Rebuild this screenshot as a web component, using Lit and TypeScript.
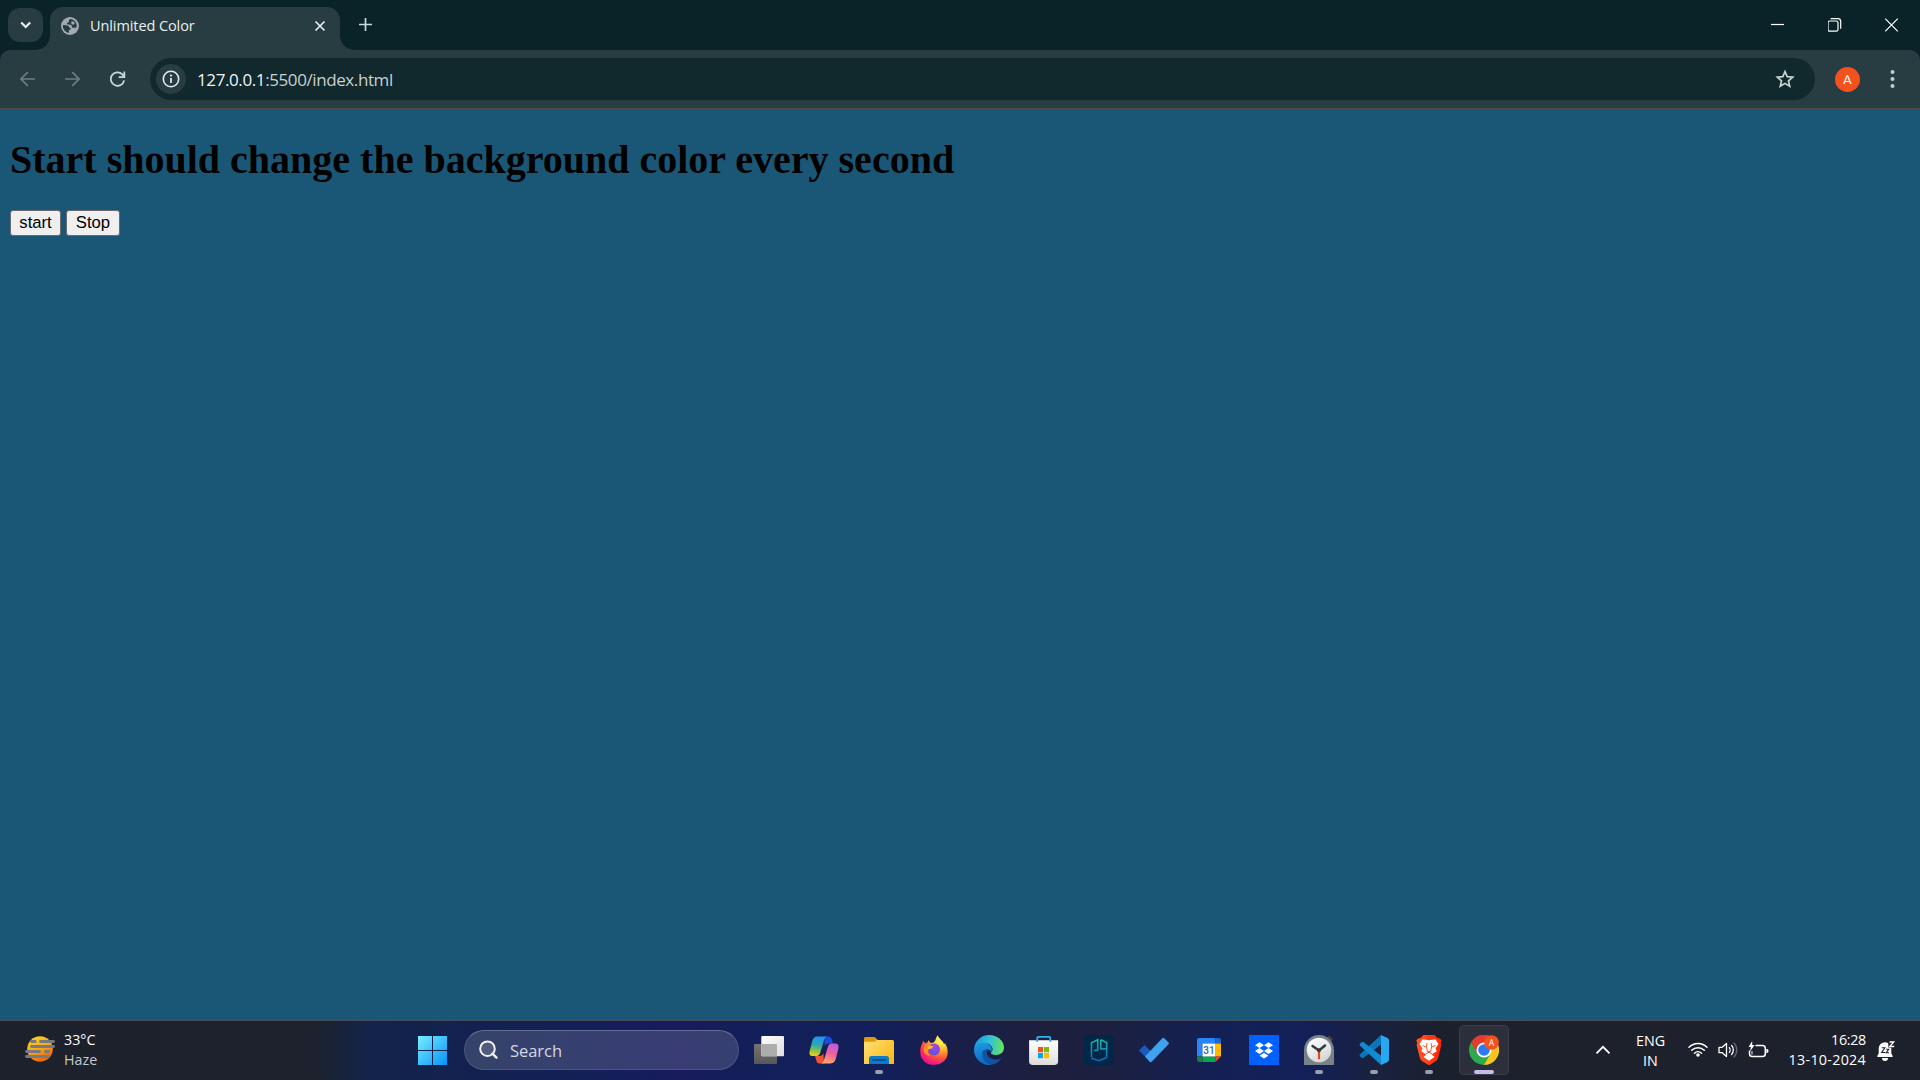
import { LitElement, html, css, svg } from "lit";
import { customElement, state } from "lit/decorators.js";

const icon = (w: number, h: number, body: unknown) =>
  html`<svg width=${w} height=${h} viewBox="0 0 ${w} ${h}" fill="none">${body}</svg>`;

const chevronDown = icon(12, 8, svg`<path d="M1.200 1.500 5.700 6l4.500-4.500" stroke="#e8efef" stroke-width="2.200"/>`);

const globe = icon(18, 18, svg`
  <circle cx="9" cy="9" r="9" fill="#a3a8b2"/>
  <path d="M9.300 1.900C8 2.500 7.600 3.300 7.900 4.200c.3 .9-.6 1.300-1.500 1.500C5.500 6 5.700 7.200 6.500 7.400c1.400.3 3.700-.1 4.200 1 .4.900-.1 2.200 1 2.400 1.400.2 2.300-.3 4.100-.6A7.200 7.200 0 0 0 9.300 1.900Z" fill="#283d42"/>
  <path d="M1.900 8.100c1.800.1 4.500.3 5.600.8 1 .5.300 1.600 1.300 1.900 1 .2 1.300.7.900 1.400-.5.700-1.700.4-1.800 1.500-.1.800.3 1.500-.5 2.200A7.200 7.200 0 0 1 1.900 8.100Z" fill="#283d42"/>
  <path d="M10.500 4.500h2.300l1 2-1.600 1.200-1.900-.8Z" fill="#a3a8b2"/>`);

const tabClose = icon(12, 12, svg`<path d="m1.500 1.500 9 9m0-9-9 9" stroke="#e8efef" stroke-width="1.700"/>`);
const plus = icon(14, 14, svg`<path d="M6.500 0v13M0 6.500h13" stroke="#c2dbdf" stroke-width="1.700"/>`);
const minimise = icon(14, 14, svg`<path d="M0 6.500h13" stroke="#fff" stroke-width="1.200"/>`);
const restore = icon(14, 14, svg`
  <g transform="translate(-.6 0)"><rect x=".6" y="3" width="10" height="10.200" rx="1.700" stroke="#fff" stroke-width="1.200"/>
  <path d="M3.200.7h7.300a2.800 2.800 0 0 1 2.800 2.800v7.300" stroke="#fff" stroke-width="1.200"/></g>`);
const windowClose = icon(14, 14, svg`<path d="m.200.700 12.600 12.600m0-12.600L.2 13.300" stroke="#fff" stroke-width="1.200"/>`);

const back = icon(16, 16, svg`<path d="M15 8H1.200M7.800 1.100.9 8l6.900 6.900" stroke="#6d7e82" stroke-width="1.700"/>`);
const forward = icon(16, 16, svg`<path d="M0 8h13.800M7.200 1.100 14.100 8l-6.900 6.900" stroke="#6d7e82" stroke-width="1.700"/>`);
const reload = icon(16, 16, svg`
  <g transform="translate(-.5 0)"><path d="M14.600 9.300A6.700 6.700 0 1 1 12.800 3.400l1.400 1.700" stroke="#c2dbdf" stroke-width="1.800"/>
  <path d="M14.800.5v5.600H9.200" stroke="#c2dbdf" stroke-width="1.800"/></g>`);
const info = icon(18, 18, svg`
  <circle cx="9" cy="9" r="7.700" stroke="#e3eaea" stroke-width="1.600"/>
  <path d="M9 8v5" stroke="#e3eaea" stroke-width="1.800"/><circle cx="9" cy="5.600" r="1.100" fill="#e3eaea"/>`);
const star = icon(20, 20, svg`
  <path d="m10 2.600 2.200 5.100 5.500.5-4.200 3.700 1.200 5.400-4.700-2.900-4.700 2.900 1.200-5.400-4.200-3.700 5.500-.5Z" stroke="#c9d3d4" stroke-width="1.700"/>`);
const kebab = icon(6, 20, svg`
  <circle cx="2.500" cy="3" r="2" fill="#b7d2d6"/><circle cx="2.500" cy="10" r="2" fill="#b7d2d6"/><circle cx="2.500" cy="17" r="2" fill="#b7d2d6"/>`);

const haze = icon(30, 26, svg`
  <defs><linearGradient id="sun" x1="8" y1="0" x2="20" y2="26" gradientUnits="userSpaceOnUse">
    <stop stop-color="#ffd21a"/><stop offset=".5" stop-color="#fba61a"/><stop offset="1" stop-color="#e8590c"/></linearGradient></defs>
  <circle cx="15" cy="13" r="12.800" fill="url(#sun)"/>
  <g stroke="#777a7e" stroke-width="2.800" stroke-linecap="round">
    <path d="M6.500 5.500h3.700M15.500 5.500h13M6.500 10.500h22M1.500 15.500h13M20.500 15.500h3M1.500 20.500h22"/></g>`);

const windowsLogo = icon(30, 30, svg`
  <defs><linearGradient id="win" x1="0" y1="0" x2="30" y2="30" gradientUnits="userSpaceOnUse">
    <stop stop-color="#7af3ff"/><stop offset="1" stop-color="#0791fb"/></linearGradient></defs>
  <path d="M1 1h14v14H1ZM16 1h14v14H16ZM1 16h14v14H1ZM16 16h14v14H16Z" fill="url(#win)"/>`);

const magnifier = icon(20, 20, svg`
  <circle cx="8.500" cy="8.700" r="7.300" fill="#ffffff22" stroke="#f0f0f5" stroke-width="2"/>
  <path d="m13.500 13.700 4 4" stroke="#f0f0f5" stroke-width="2.400" stroke-linecap="round"/>`);

const taskView = icon(30, 30, svg`
  <defs><linearGradient id="tvw" x1="8" y1="1" x2="30" y2="21" gradientUnits="userSpaceOnUse">
    <stop stop-color="#fff"/><stop offset="1" stop-color="#dedede"/></linearGradient>
  <linearGradient id="tvg" x1="0" y1="9" x2="0" y2="29" gradientUnits="userSpaceOnUse">
    <stop stop-color="#747474"/><stop offset="1" stop-color="#575757"/></linearGradient></defs>
  <rect x="0" y="9" width="23" height="20" rx="1" fill="url(#tvg)"/>
  <rect x="7.300" y="1" width="22.700" height="20.300" rx="1" fill="url(#tvw)"/>
  <path d="M7.300 9H22q1 0 1 1v11.300H8.300q-1 0-1-1Z" fill="#adadad"/>`);

const copilot = icon(30, 28, svg`
  <defs><linearGradient id="cpa" x1="8" y1="0" x2="5" y2="20" gradientUnits="userSpaceOnUse">
    <stop stop-color="#2390f5"/><stop offset=".45" stop-color="#28acb0"/><stop offset=".75" stop-color="#8fc43f"/><stop offset="1" stop-color="#f5cf19"/></linearGradient>
  <linearGradient id="cpb" x1="25" y1="7" x2="18" y2="28" gradientUnits="userSpaceOnUse">
    <stop stop-color="#b45ce8"/><stop offset=".5" stop-color="#ef6099"/><stop offset="1" stop-color="#ffac68"/></linearGradient></defs>
  <path d="M15 .6h4.300c2.400 0 3.200 1.500 3.900 4l.8 2.900h-4.500c-2 0-3 .9-3.700 3Z" fill="#1b4cd8"/>
  <path d="M15 27.400h-4.300c-2.400 0-3-1.500-3.700-4l-.9-3.400h4.500c2 0 3-.9 3.700-3Z" fill="#f25535"/>
  <path d="M8.500.6h9.300c-1.600.5-2.300 2-2.900 4l-3.600 12c-.7 2.300-1.800 3.400-4 3.400H3.900C.7 20 0 18.200.6 15.500l2.500-10C4 2.300 5.500.6 8.500.600Z" fill="url(#cpa)"/>
  <path d="M21.500 27.400h-9.300c1.600-.5 2.300-2 2.900-4l3.600-12C19.400 9 20.500 7.500 22.700 7.500h3.400c3.200 0 3.900 2.300 3.300 5l-2.500 10c-.9 3.200-2.400 4.900-5.400 4.900Z" fill="url(#cpb)"/>`);

const folder = icon(30, 28, svg`
  <defs><linearGradient id="fld" x1="2" y1="4" x2="28" y2="28" gradientUnits="userSpaceOnUse">
    <stop stop-color="#ffdf73"/><stop offset="1" stop-color="#fab813"/></linearGradient></defs>
  <path d="M0 2.500Q0 1 1.500 1h8.300q1 0 1.800.8l2.200 2.200H29v8H0Z" fill="#dc9a0b"/>
  <path d="M0 5.800h9.800q1 0 1.900-.9l1-.9H28.500Q30 4 30 5.500V28H0Z" fill="url(#fld)"/>
  <path d="M5 28v-5.500Q5 20 7.500 20h15q2.500 0 2.500 2.500V28Z" fill="#0c79c9"/>
  <path d="M8.500 24h13" stroke="#08477f" stroke-width="1.400" stroke-linecap="round"/>`);

const firefox = icon(30, 30, svg`
  <defs><radialGradient id="ffx" cx="23" cy="4" r="27" gradientUnits="userSpaceOnUse">
    <stop offset=".15" stop-color="#fff04a"/><stop offset=".45" stop-color="#ffa62b"/><stop offset=".72" stop-color="#ff4f3c"/><stop offset="1" stop-color="#f2118d"/></radialGradient>
  <radialGradient id="ffp" cx="16" cy="11" r="9" gradientUnits="userSpaceOnUse">
    <stop stop-color="#a443e8"/><stop offset="1" stop-color="#6253db"/></radialGradient></defs>
  <path d="M3.200 8.500 4 5.700l2 2.300 2.500-.5L9.300 5l2.500 3c2 0 3-.7 4.300-2.200C17 3.500 17.600 1.500 18.600.300c1 2.300 2.400 3.600 4 5.100 1.300 1.200 2 2.200 2.500 3.700l.9-.9c2 2.900 3 6.300 2.600 9.800a13.600 11.600 0 0 1-27.200.5C1 14.500 1.500 11 3.200 8.500Z" fill="url(#ffx)"/>
  <circle cx="15" cy="14.500" r="6" fill="url(#ffp)"/>
  <path d="M5.500 10.500c3-1.500 6.500-.6 7.900.9l-1.700 2.300c-2 0-2.700.9-2.700 2.800 0 1.700.8 3.200 2.400 4.200-5 .4-8.400-4.700-5.900-10.200Z" fill="#ff8f24"/>
  <path d="M9 11h5.500l-2 2.800H9Z" fill="#ffb33a"/>`);

const edge = icon(30, 30, svg`
  <defs><linearGradient id="edt" x1="2" y1="9" x2="29" y2="13" gradientUnits="userSpaceOnUse">
    <stop stop-color="#1e9ddb"/><stop offset=".5" stop-color="#35c1d6"/><stop offset="1" stop-color="#65e35a"/></linearGradient>
  <linearGradient id="edb" x1="5" y1="8" x2="10" y2="29" gradientUnits="userSpaceOnUse">
    <stop stop-color="#1a9ae3"/><stop offset="1" stop-color="#0b67c2"/></linearGradient></defs>
  <path d="M0 15A15 15 0 0 1 15 0c8.500 0 15 6 15 12.500 0 4.700-3.500 7.500-8 7.500-3 0-5.500-1-5-2.500 2-1.500 2-4 .6-6C14 6 4.500 8 0 15Z" fill="url(#edt)"/>
  <path d="M0 15C2.500 8.500 9 6.700 13 8.300c4.500 1.700 6 6 4 9.200-.5-2.500-3-3.500-5-2.500-2.600 1.500-3 5.500-1 9 1.600 3 4.600 5.300 7.500 5.600A15 15 0 0 1 0 15Z" fill="url(#edb)"/>
  <path d="M8.500 16.500c-1.500 6 3.500 13.200 10 13.100 3.500-.7 7-2.900 9.300-6.600-6.500 3.500-13.800.5-14.800-4.500-.4-1.500.3-3 1-3.700-2.500-.7-4.800.200-5.500 1.700Z" fill="#10549f"/>`);

const store = icon(30, 30, svg`
  <defs><linearGradient id="sto" x1="0" y1="6" x2="0" y2="30" gradientUnits="userSpaceOnUse">
    <stop stop-color="#fff"/><stop offset="1" stop-color="#dcdcdc"/></linearGradient></defs>
  <g transform="translate(-.5 0)">
  <path d="M8.700 6.500V3q0-1.200 1.200-1.200h10.700q1.200 0 1.200 1.200v3.500" stroke="#2bb6ec" stroke-width="1.800"/>
  <path d="M.6 5.200h29v21q0 3.800-3.800 3.800H4.400Q.6 30 .6 26.200Z" fill="url(#sto)"/>
  <path d="M8.700 5v1.700M21.800 5v1.700" stroke="#1c9fd8" stroke-width="1.800"/>
  <path d="M9.500 12h5v5.200h-5Z" fill="#f25022"/><path d="M15.500 12h5v5.200h-5Z" fill="#7fba00"/>
  <path d="M9.500 18h5v5.200h-5Z" fill="#00a4ef"/><path d="M15.500 18h5v5.200h-5Z" fill="#ffb900"/></g>`);

const helmet = icon(30, 30, svg`
  <defs><linearGradient id="hlm" x1="0" y1="4" x2="0" y2="26" gradientUnits="userSpaceOnUse">
    <stop stop-color="#12b8a7"/><stop offset="1" stop-color="#1264c0"/></linearGradient></defs>
  <path d="M0 0h30v30H0Z" fill="#022645"/>
  <path d="M7.500 22.200V7.700L13.700 4.800V15.400H10M16.800 4.800 22.700 7.700V22.200M16.800 4.800V13.900H22.700M7.300 23.200 15 25.700 22.900 22.600" stroke="url(#hlm)" stroke-width="1.600"/>`);

const todo = icon(30, 26, svg`
  <path d="m0 13.500 5.500-5.600L17 19.300l-5.500 5.900Z" fill="#195abe"/>
  <path d="M6 19.500 23.300 1.200q1-.9 2 0l4.200 4.300q.8.900 0 1.800L12.700 24.800q-1 .9-2 0Z" fill="#3fa2ee"/>`);

const calendar = icon(24, 24, svg`
  <path d="M0 2Q0 0 2 0h16.500v5.500h-13v13H0Z" fill="#2684fc"/><path d="M18.500 0H22q2 0 2 2v3.500h-5.500Z" fill="#1967d2"/>
  <path d="M18.500 5.500H24v13h-5.500Z" fill="#ffba00"/><path d="M5.500 18.500h13V24h-13Z" fill="#00ac47"/>
  <path d="M0 18.500h5.500V24H2q-2 0-2-2Z" fill="#188038"/><path d="M18.500 18.500H24L18.500 24Z" fill="#ea4335"/>
  <path d="M5.500 5.500h13v13h-13Z" fill="#fff"/>
  <text x="12" y="15.800" text-anchor="middle" font-family="Roboto, sans-serif" font-weight="500" font-size="10" fill="#1967d2">31</text>`);

const dropbox = icon(30, 30, svg`
  <path d="M0 0h30v30H0Z" fill="#0061fe"/>
  <path d="m10.500 7.300 4.500 2.900-4.500 2.900L6 10.200ZM19.500 7.300l4.500 2.900-4.500 2.900-4.500-2.900ZM10.500 13.100 15 16l-4.500 2.900L6 16ZM19.500 13.100 24 16l-4.500 2.900L15 16ZM15 17.800l4.500 2.900-4.500 2.900-4.500-2.900Z" fill="#fff"/>`);

const clock = icon(30, 30, svg`
  <defs><linearGradient id="clk" x1="8" y1="3" x2="22" y2="27" gradientUnits="userSpaceOnUse">
    <stop stop-color="#fff"/><stop offset="1" stop-color="#d0d2d4"/></linearGradient></defs>
  <path d="m23 2.500 2-2 4 4-2 2.500Z" fill="#4a4640"/>
  <path d="M0 15a15 15 0 0 1 30 0v15H0Z" fill="#788289"/>
  <circle cx="15" cy="15" r="12.300" fill="url(#clk)"/>
  <path d="M15 15.500v8.700" stroke="#e34a12" stroke-width="2.200"/>
  <path d="m8.500 11 6.500 4.500 6-5" stroke="#34383b" stroke-width="2.500" stroke-linecap="round"/><circle cx="15" cy="15.300" r="2" fill="#34383b"/>`);

const vscode = icon(30, 30, svg`
  <path d="M22 0 1 19.200q-1 1 0 2l1.700 1.600q.9.700 1.900 0L23 8.800Z" fill="#0876bb"/>
  <path d="M22 30 1 10.800q-1-1 0-2l1.700-1.600q.9-.7 1.900 0L23 21.200Z" fill="#1389d2"/>
  <path d="M22 30V0l6.500 3q1.500.7 1.500 2.200v19.600q0 1.500-1.500 2.200Z" fill="#29a8f2"/>`);

const brave = icon(26, 30, svg`
  <defs><linearGradient id="brv" x1="0" y1="15" x2="26" y2="15" gradientUnits="userSpaceOnUse">
    <stop stop-color="#ff5627"/><stop offset="1" stop-color="#ff2500"/></linearGradient></defs>
  <path d="m7.500 0-3 3C2.700 2.700 1.500 3.500.3 5.500L1.300 8l-.7 2L4 23.300q.5 1.600 2 2.600l5.500 3.700q1.500.9 3 0L20 25.900q1.500-1 2-2.600L25.400 10l-.7-2 1-2.500c-1.200-2-2.400-2.800-4.200-2.500l-3-3Z" fill="url(#brv)"/>
  <path d="m13 5.300 6.500-1L22.500 9l-3 4.200 1.200 3-5 3.300L18.500 22 13 25.700 7.500 22l2.800-2.500-5-3.300 1.200-3L3.500 9l3-4.700Z" fill="#fff"/>
  <path d="m11 8-.7 3.500 1.200 5h3l1.200-5L15 8M6.500 10.500l4 1.500M19.500 10.500l-4 1.500M10 18.800l3-1.500 3 1.500" stroke="#ff4017" stroke-width=".9"/>`);

const chrome = icon(30, 30, svg`
  <circle cx="15" cy="15" r="15" fill="#2da94f"/>
  <path d="M15 15 2 7.500A15 15 0 0 1 28 7.500Z" fill="#e33b2e"/><path d="M2 7.500 8.500 18.700 15 15V7.500Z" fill="#e33b2e"/>
  <path d="M15 7.500H28A15 15 0 0 1 15 30l6.500-11.300Z" fill="#fcc31e"/>
  <circle cx="15" cy="15" r="7.500" fill="#fff"/><circle cx="15" cy="15" r="5.800" fill="#2a7bf0"/>
  <circle cx="22.500" cy="7.500" r="7.300" fill="#f4511e"/>
  <text x="22.500" y="10.600" text-anchor="middle" font-family="Roboto, sans-serif" font-size="8.500" fill="#fff">A</text>`);

const chevronUp = icon(16, 10, svg`<path d="m1.500 8.300 6.500-6.500 6.500 6.500" stroke="#fff" stroke-width="1.800"/>`);
const wifi = icon(20, 16, svg`
  <g stroke="#fff" stroke-width="1.500" stroke-linecap="round"><path d="M1 6.200a12.700 12.700 0 0 1 18 0M3.700 9.300a8.900 8.900 0 0 1 12.600 0M6.500 12.200a5 5 0 0 1 7 0"/></g>
  <circle cx="10" cy="14" r="1.800" fill="#fff"/>`);
const speaker = icon(20, 18, svg`
  <path d="M1 6.300h3.200L8.500 2.500v13L4.200 11.700H1Z" stroke="#fff" stroke-width="1.300" stroke-linejoin="round"/>
  <path d="M11 6.200a4 4 0 0 1 0 5.600M13.300 4a7.200 7.200 0 0 1 0 10" stroke="#fff" stroke-width="1.300"/>
  <path d="M15.700 1.600a10.500 10.500 0 0 1 0 14.800" stroke="#666b74" stroke-width="1.300"/>`);
const battery = icon(21, 18, svg`
  <path d="M7.500 4.500H14.500Q17.300 4.500 17.300 7.300v5.400q0 2.800-2.800 2.800H4.300Q1.500 15.500 1.500 12.700V9.500" stroke="#fff" stroke-width="1.500"/>
  <path d="M18.300 8h.8q1.400 0 1.400 2t-1.400 2h-.8Z" fill="#fff"/>
  <path d="M4.200 0 .5 6h2.300L2 10.500 6.600 4H4.200Z" fill="#fff"/><path d="M4 10v3.500" stroke="#ccc" stroke-width="1.200"/>`);
const bell = icon(18, 20, svg`
  <path d="M8 1.200a6.300 6.300 0 0 0-6.300 6.300v5L.3 15v1h15.400v-1l-1.400-2.500v-5A6.300 6.300 0 0 0 8 1.200Z" fill="#fff"/>
  <path d="M5 17h6a3 3 0 0 1-6 0Z" fill="#fff"/>
  <path d="M11.300 0H18v6.600h-6.700Z" fill="#1d212b"/>
  <path d="M12.500 1h4.200L12.700 5.500h4.500" stroke="#fff" stroke-width="1.300"/>
  <path d="M4.700 6.800h3.200L4.700 11.500h3.500M9.200 8.300h2.500l-2.500 3.400h2.800" stroke="#1d212b" stroke-width="1.100"/>`);

interface Pinned {
  name: string;
  art: unknown;
  open?: boolean;
  active?: boolean;
}

const pinned: Pinned[] = [
  { name: "Task view", art: taskView },
  { name: "Copilot", art: copilot },
  { name: "Files", art: folder, open: true },
  { name: "Firefox", art: firefox },
  { name: "Edge", art: edge },
  { name: "Store", art: store },
  { name: "Helmet", art: helmet },
  { name: "To Do", art: todo },
  { name: "Calendar", art: calendar },
  { name: "Dropbox", art: dropbox },
  { name: "Clock", art: clock, open: true },
  { name: "Code", art: vscode, open: true },
  { name: "Brave", art: brave, open: true },
  { name: "Chrome", art: chrome, active: true },
];

@customElement("browser-frame")
class BrowserFrame extends LitElement {
  static styles = css`
    :host { display: block; font-family: "Open Sans", "Noto Sans", sans-serif; }
    svg { display: block; flex: none; }
    .tabs { display: flex; height: 50px; background: #0a2328; padding-left: 8px; box-sizing: border-box; }
    .tabsearch { width: 35px; height: 34px; margin-top: 8px; border-radius: 12px; background: #283d42; display: grid; place-items: center; }
    .tab { position: relative; box-sizing: border-box; width: 290px; height: 43px; margin: 7px 0 0 7px; padding: 0 14px 6px 11px; border-radius: 13px 13px 0 0; background: #283d42; display: flex; align-items: center; color: #e8efef; font-size: 14.5px; letter-spacing: -0.09px; }
    .tab::before, .tab::after { content: ""; position: absolute; bottom: 0; width: 14px; height: 14px; }
    .tab::before { left: -14px; background: radial-gradient(circle at 0 0, transparent 13.500px, #283d42 14px); }
    .tab::after { right: -14px; background: radial-gradient(circle at 100% 0, transparent 13.500px, #283d42 14px); }
    .title { flex: 1; padding-left: 11px; line-height: 20px; }
    .new { width: 51px; display: grid; place-items: center; }
    .controls { margin-left: auto; display: flex; height: 49px; }
    .control { width: 57px; display: grid; place-items: center; }
    .edge { background: #0a2328; }
    .toolbar { box-sizing: border-box; height: 59px; background: #283d42; border-radius: 10px 10px 0 0; border-bottom: 1px solid #51484e; display: flex; align-items: center; padding: 0 5px; }
    .tool { width: 45px; display: grid; place-items: center; }
    .omnibox { flex: 1; margin: 0 10px; height: 42px; border-radius: 21px; background: #11282c; display: flex; align-items: center; box-sizing: border-box; padding: 0 20px 0 6px; }
    .site { width: 30px; height: 30px; border-radius: 50%; background: #283d42; display: grid; place-items: center; }
    .url { flex: 1; padding: 2px 0 0 11px; font-size: 17px; letter-spacing: -0.4px; color: #c9d0d1; line-height: 24px; }
    .host { color: #f0f4f4; }
    .avatar { width: 25px; height: 25px; border-radius: 50%; background: #f4511e; color: #fff; font: 13.5px/25px Roboto, sans-serif; text-align: center; }
  `;

  render() {
    return html`
      <div class="tabs">
        <div class="tabsearch">${chevronDown}</div>
        <div class="tab">${globe}<span class="title">Unlimited Color</span>${tabClose}</div>
        <div class="new">${plus}</div>
        <div class="controls">
          <div class="control">${minimise}</div>
          <div class="control">${restore}</div>
          <div class="control">${windowClose}</div>
        </div>
      </div>
      <div class="edge">
        <div class="toolbar">
          <div class="tool">${back}</div>
          <div class="tool">${forward}</div>
          <div class="tool">${reload}</div>
          <div class="omnibox">
            <div class="site">${info}</div>
            <span class="url"><span class="host">127.0.0.1</span>:5500/index.html</span>
            ${star}
          </div>
          <div class="tool"><div class="avatar">A</div></div>
          <div class="tool">${kebab}</div>
        </div>
      </div>
    `;
  }
}

@customElement("task-bar")
class TaskBar extends LitElement {
  static styles = css`
    :host { display: flex; box-sizing: border-box; height: 60px; border-top: 1px solid #484b59; color: #fff; font: 14.3px/20px "Open Sans", "Noto Sans", sans-serif;
      background: linear-gradient(90deg, #1d212b 0, #1d222c 315px, #17233c 345px, #14234a 370px, #13224e 440px, #122055 550px, #151d5b 640px, #181b5c 680px, #141e59 720px, #13205a 780px, #131f58 890px, #1a1f4a 960px, #1d1f3c 1050px, #1b2042 1120px, #142054 1210px, #13205a 1300px, #182140 1370px, #1b202e 1440px, #1d212b 1540px); }
    svg { display: block; flex: none; }
    .weather { width: 382px; padding-left: 25px; display: flex; align-items: flex-start; }
    .weather svg { margin-top: 15px; }
    .reading { padding: 9px 0 0 9px; }
    .haze { color: #c6c8cc; }
    .cell { position: relative; box-sizing: border-box; width: 50px; height: 50px; margin-top: 4px; border-radius: 5px; display: grid; place-items: center; }
    .active { background: #ffffff12; border: 1px solid #ffffff14; }
    .mark { position: absolute; left: 50%; bottom: 1px; width: 8px; height: 4px; margin-left: -4px; border-radius: 2px; background: #9a9daf; }
    .active .mark { width: 20px; margin-left: -10px; bottom: 0; background: #c5bdea; }
    .search { box-sizing: border-box; width: 275px; height: 40px; margin: 9px 5px 0 7px; padding-left: 14px; border-radius: 20px; background: #ffffff26; border: 1px solid #ffffff1c; border-top-color: #ffffff40; display: flex; align-items: center; gap: 11px; font-size: 16.5px; letter-spacing: -0.05px; color: #d5d6e2; }
    .search span { padding-top: 1px; }
    .apps { display: flex; gap: 5px; }
    .tray { margin-left: auto; display: flex; align-items: flex-start; padding-right: 25px; }
    .tray svg { margin-top: 20px; }
    .tray .chevron svg { margin-top: 24px; }
    .lang { width: 77px; padding: 10px 0 0 2px; box-sizing: border-box; text-align: center; }
    .status { display: flex; gap: 10px; }
    .when { width: 97px; padding: 9px 11px 0 0; text-align: right; }
    .time { letter-spacing: -0.3px; }
    .date { letter-spacing: 0.28px; }
  `;

  render() {
    return html`
      <div class="weather">${haze}<div class="reading"><div>33°C</div><div class="haze">Haze</div></div></div>
      <div class="cell">${windowsLogo}</div>
      <div class="search">${magnifier}<span>Search</span></div>
      <div class="apps">
        ${pinned.map(
          (app) => html`<div class="cell ${app.active ? "active" : ""}">
            ${app.art}${app.open || app.active ? html`<i class="mark"></i>` : ""}
          </div>`
        )}
      </div>
      <div class="tray">
        <div class="chevron">${chevronUp}</div>
        <div class="lang"><div>ENG</div><div>IN</div></div>
        <div class="status">${wifi}${speaker}${battery}</div>
        <div class="when"><div class="time">16:28</div><div class="date">13-10-2024</div></div>
        ${bell}
      </div>
    `;
  }
}

@customElement("app-root")
class AppRoot extends LitElement {
  static styles = css`
    :host { display: flex; flex-direction: column; width: 1920px; height: 1080px; overflow: hidden; }
    .page { flex: 1; box-sizing: border-box; padding: 28px 10px 0; background: #1a5776; }
    h1 { margin: 0; font: bold 40px/46px "Liberation Serif", serif; color: #000; }
    .actions { display: flex; gap: 5px; margin-top: 27px; }
    button { box-sizing: border-box; height: 26px; width: 51px; padding: 0; border: 1px solid #6b6b6b; border-radius: 3px; background: #efefef; color: #000; font: 16.667px/22px "Liberation Sans", sans-serif; }
    .stop { width: 54px; }
  `;

  @state() private colour = "";
  private timer = 0;

  private start = () => {
    if (this.timer) return;
    this.timer = window.setInterval(() => {
      this.colour = "#" + Math.floor(Math.random() * 0x1000000).toString(16).padStart(6, "0");
    }, 1000);
  };

  private stop = () => {
    window.clearInterval(this.timer);
    this.timer = 0;
  };

  disconnectedCallback() {
    super.disconnectedCallback();
    this.stop();
  }

  render() {
    return html`
      <browser-frame></browser-frame>
      <main class="page" style=${this.colour ? `background:${this.colour}` : ""}>
        <h1>Start should change the background color every second</h1>
        <div class="actions">
          <button @click=${this.start}>start</button>
          <button class="stop" @click=${this.stop}>Stop</button>
        </div>
      </main>
      <task-bar></task-bar>
    `;
  }
}
